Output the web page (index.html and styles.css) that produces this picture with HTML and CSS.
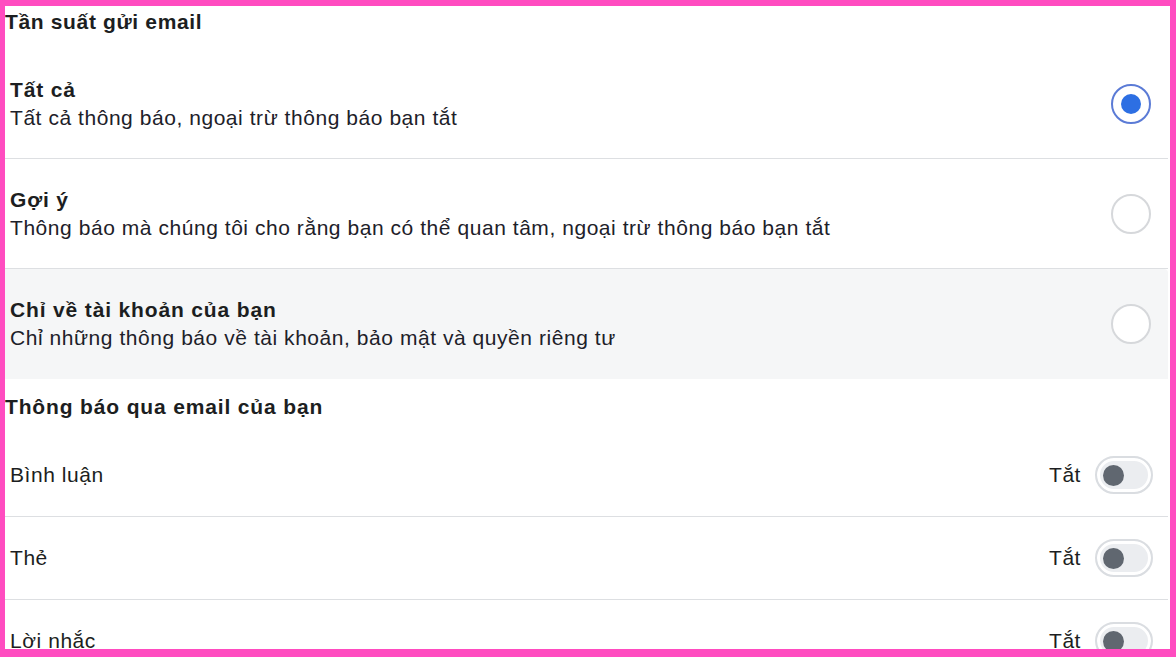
FILE: index.html
```html
<!DOCTYPE html>
<html lang="vi">
<head>
<meta charset="utf-8">
<title>Tần suất gửi email</title>
<link rel="stylesheet" href="styles.css">
</head>
<body>
<div class="frame">
  <div class="content">
    <h2 class="section-title first">Tần suất gửi email</h2>
    <div class="options">
      <div class="option">
        <div class="option-text">
          <div class="option-title">Tất cả</div>
          <div class="option-desc">Tất cả thông báo, ngoại trừ thông báo bạn tắt</div>
        </div>
        <span class="radio checked"></span>
      </div>
      <div class="option">
        <div class="option-text">
          <div class="option-title">Gợi ý</div>
          <div class="option-desc">Thông báo mà chúng tôi cho rằng bạn có thể quan tâm, ngoại trừ thông báo bạn tắt</div>
        </div>
        <span class="radio"></span>
      </div>
      <div class="option hover">
        <div class="option-text">
          <div class="option-title">Chỉ về tài khoản của bạn</div>
          <div class="option-desc">Chỉ những thông báo về tài khoản, bảo mật và quyền riêng tư</div>
        </div>
        <span class="radio"></span>
      </div>
    </div>
    <h2 class="section-title second">Thông báo qua email của bạn</h2>
    <div class="toggles">
      <div class="toggle-row">
        <span class="toggle-label">Bình luận</span>
        <span class="toggle-state">Tắt</span>
        <span class="switch"><span class="knob"></span></span>
      </div>
      <div class="toggle-row">
        <span class="toggle-label">Thẻ</span>
        <span class="toggle-state">Tắt</span>
        <span class="switch"><span class="knob"></span></span>
      </div>
      <div class="toggle-row">
        <span class="toggle-label">Lời nhắc</span>
        <span class="toggle-state">Tắt</span>
        <span class="switch"><span class="knob"></span></span>
      </div>
    </div>
  </div>
</div>
</body>
</html>
```

FILE: styles.css
```css
html, body {
  margin: 0;
  padding: 0;
  background: #ffffff;
}

.frame {
  box-sizing: border-box;
  width: 1176px;
  height: 657px;
  border-style: solid;
  border-color: #ff4cc0;
  border-width: 6px 6px 8px 5px;
  overflow: hidden;
  background: #ffffff;
}

.content {
  width: 1163px;
  font-family: "Liberation Sans", Arial, sans-serif;
  color: #1c1e21;
  letter-spacing: 0.55px;
}

.section-title {
  margin: 0;
  font-size: 21px;
  font-weight: bold;
  padding-left: 0;
  display: flex;
  align-items: center;
}

.section-title.first {
  height: 32px;
  margin-bottom: 11px;
  letter-spacing: 0.65px;
}

.section-title.second {
  height: 55px;
  letter-spacing: 0.85px;
}

.option {
  display: flex;
  align-items: center;
  height: 110px;
  box-sizing: border-box;
  border-bottom: 1px solid #dddfe2;
  padding: 0 17px 0 5px;
}

.option.hover {
  background: #f5f6f7;
  border-bottom: none;
  border-radius: 0 4px 0 0;
}

.option-text {
  flex: 1;
  display: flex;
  flex-direction: column;
  gap: 4px;
  margin-top: 0;
}

.option-title {
  font-size: 21px;
  font-weight: bold;
  line-height: 24px;
  letter-spacing: 0.85px;
}

.option-desc {
  font-size: 21px;
  line-height: 24px;
  color: #1d2129;
}

.radio {
  box-sizing: border-box;
  width: 40px;
  height: 40px;
  border-radius: 50%;
  border: 2px solid #d6d8db;
  background: #ffffff;
  display: flex;
  align-items: center;
  justify-content: center;
}

.radio.checked {
  border-color: #5b7bd6;
}

.radio.checked::after {
  content: "";
  width: 20px;
  height: 20px;
  border-radius: 50%;
  background: #2d6fe3;
}

.toggle-row {
  display: flex;
  align-items: center;
  height: 83px;
  box-sizing: border-box;
  border-bottom: 1px solid #dddfe2;
  padding: 0 15px 0 5px;
}

.toggle-label {
  flex: 1;
  font-size: 21px;
}

.toggle-state {
  font-size: 21px;
  margin-right: 14px;
}

.switch {
  box-sizing: border-box;
  width: 58px;
  height: 38px;
  border-radius: 19px;
  border: 2px solid #dadde1;
  background: #ebedf0;
  box-shadow: inset 0 0 0 3px #ffffff;
  display: flex;
  align-items: center;
  padding-left: 6px;
}

.knob {
  width: 21px;
  height: 21px;
  border-radius: 50%;
  background: #606770;
}
```
